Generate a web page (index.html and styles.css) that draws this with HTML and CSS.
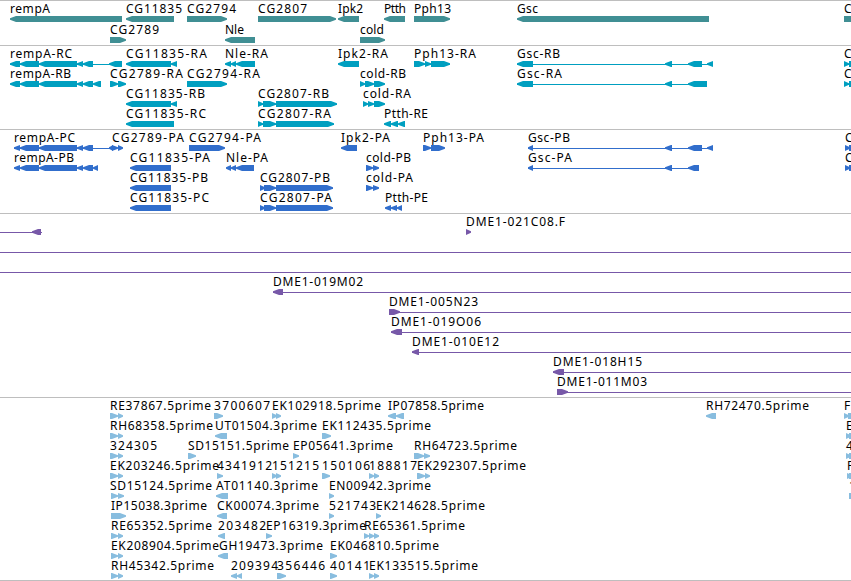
FILE: index.html
```
<!DOCTYPE html>
<html lang="en">
<head>
<meta charset="utf-8">
<title>Genome tracks</title>
<link rel="stylesheet" href="styles.css">
</head>
<body>
<main class="browser" id="browser"></main>
<script src="tracks.js"></script>
</body>
</html>
```
FILE: styles.css
```
html, body {
  margin: 0;
  background: #fff;
}
body {
  overflow: hidden;
}
.browser {
  display: flex;
  flex-direction: column;
  width: 851px;
  height: 580px;
  border-bottom: 1px solid #bebebe;
}
.track {
  box-sizing: border-box;
  border-top: 1px solid #bebebe;
  overflow: hidden;
}
.track svg {
  display: block;
}
.label {
  font-family: "Noto Sans", "Open Sans", sans-serif;
  font-size: 12px;
  fill: #000;
}
.gene { height: 45px; }
.gene .glyph { fill: #408f94; }
.transcript { height: 84px; }
.transcript .glyph { fill: #009fc0; }
.protein { height: 84px; }
.protein .glyph { fill: #316ecc; }
.clone { height: 184px; }
.clone .glyph { fill: #7758a8; }
.est { height: 183px; }
.est .glyph { fill: #88bddf; }
```
FILE: tracks.js
```
// Feature format: label | label start | label end | strand | blocks | connector
// An empty label end leaves the text at its natural width.
const tracks = [
  { kind: 'gene', height: 44, pitch: 21, rows: [
    ['rempA|10|50|<|10-122', 'CG11835|126|182|<|126-174', 'CG2794|187|236|>|187-227',
     'CG2807|258|307|>|258-336', 'Ipk2|338|363|<|338-359', 'Ptth|384|406|<|384-405',
     'Pph13|414|451|>|414-450', 'Gsc|517|538|<|517-709', 'C|844||>|844-900'],
    ['CG2789|110|159|>|110-126', 'Nle|225|244|<|225-255', 'cold|360|384|>|360-385']
  ]},
  { kind: 'transcript', height: 83, pitch: 20, rows: [
    ['rempA-RC|10|72|<|10-20,20-39,39-77,77-83,83-93,109-122|10-122',
     'CG11835-RA|126|207|<|126-171,171-177', 'Nle-RA|225|268|<|225-231,231-236,236-255',
     'Ipk2-RA|338|388|<|338-359', 'Pph13-RA|414|476|>|414-425,425-431,431-450|414-450',
     'Gsc-RB|517|560|<|517-533,665-672,688-702,707-713|517-713', 'C|844||>|844-849,849-870|844-870'],
    ['rempA-RB|10|71|<|10-20,20-39,39-77,77-83,83-93,93-101', 'CG2789-RA|110|183|>|110-118,118-126',
     'CG2794-RA|187|260|>|187-227', 'cold-RB|360|406|>|360-365,365-374,374-385',
     'Gsc-RA|517|562|<|517-533,665-672,688-707|517-707', 'C|844||>|844-849,849-870|844-870'],
    ['CG11835-RB|126|205|<|126-171,171-177', 'CG2807-RB|258|329|>|258-263,263-276,276-337|258-337',
     'cold-RA|363|411|>|363-368,368-374,374-385'],
    ['CG11835-RC|126|206|<|126-174', 'CG2807-RA|258|331|>|258-263,263-276,276-334|258-334',
     'Ptth-RE|384|428|<|384-391,391-398,398-405']
  ]},
  { kind: 'protein', height: 83, pitch: 20, rows: [
    ['rempA-PC|14|75|<|14-20,20-39,39-77,77-83,83-93,109-113|14-113',
     'CG2789-PA|112|184|>|112-118,118-123', 'CG2794-PA|189|261|>|189-225',
     'Ipk2-PA|341|390|<|341-357', 'Pph13-PA|423|484|>|423-431,431-445',
     'Gsc-PB|528|570|<|528-533,665-672,688-702,707-713|528-713', 'C|845||>|845-850,849-870|845-870'],
    ['rempA-PB|14|74|<|14-20,20-39,39-77,77-83,83-93,93-98', 'CG11835-PA|130|210|<|130-171',
     'Nle-PA|226|268|<|226-231,231-236,236-254', 'cold-PB|366|411|>|366-373,373-379',
     'Gsc-PA|528|572|<|528-533,665-672,688-699|528-699', 'C|845||>|845-850,849-870|845-870'],
    ['CG11835-PB|130|208|<|130-171', 'CG2807-PB|260|330|>|260-265,264-276,276-333|260-333',
     'cold-PA|366|413|>|366-373,373-379'],
    ['CG11835-PC|130|209|<|130-171', 'CG2807-PA|260|332|>|260-265,264-276,276-333|260-333',
     'Ptth-PE|385|428|<|385-391,391-397,397-402']
  ]},
  { kind: 'clone', height: 183, pitch: 20, rows: [
    ['|||<|32-41|0-42', 'DME1-021C08.F|466|565|>|466-471'],
    ['|||<||0-851'],
    ['|||<||0-851'],
    ['DME1-019M02|273|363|<|273-283|273-851'],
    ['DME1-005N23|389|478|>|389-400|389-851'],
    ['DME1-019O06|391|481|<|391-402|391-851'],
    ['DME1-010E12|412|499|<|412-419|412-851'],
    ['DME1-018H15|553|642|<|553-564|553-851'],
    ['DME1-011M03|557|647|>|557-568|557-851']
  ]},
  { kind: 'est', height: 182, pitch: 20, rows: [
    ['RE37867.5prime|110|211|>|110-118,118-123', '3700607|214|270|>|214-223',
     'EK102918.5prime|272|381|>|272-277,276-281', 'IP07858.5prime|388|484|<|388-396,396-404',
     'RH72470.5prime|706|809|<|706-716', 'F|844||>|844-849,848-870'],
    ['RH68358.5prime|110|213|>|110-118,118-123', 'UT01504.3prime|215|317|<|215-227',
     'EK112435.5prime|322|431|>|322-331', 'E|846||>|846-851,849-870'],
    ['324305|110|157|>|110-118,118-123', 'SD15151.5prime|188|289|>|188-196',
     'EP05641.3prime|293|393|>|293-299', 'RH64723.5prime|414|517|>|414-424,424-430',
     '4|846||>|846-851,849-870'],
    ['EK203246.5prime|110|219|>|110-118,118-123', '4341912|217|272|>|217-223',
     '151215|272|319|>|272-277,276-281', '150106|322|370|>|322-330',
     '188817|369|417|>|369-374,374-379', 'EK292307.5prime|417|526|>|417-425,425-430',
     'F|847||>|847-852,849-870'],
    ['SD15124.5prime|110|212|>|111-118,118-124', 'AT01140.3prime|216|318|<|216-228',
     'EN00942.3prime|329|431|>|329-334', '1|849||>|849-870'],
    ['IP15038.3prime|111|207|>|111-126', 'CK00074.3prime|217|319|<|217-227',
     '521743|329|376|>|329-334', 'EK214628.5prime|376|485|>|376-381'],
    ['RE65352.5prime|111|212|>|111-118,118-123', '203482|218|266|<|218-225',
     'EP16319.3prime|266|366|>|266-272', 'RE65361.5prime|364|465|>|364-369,369-374,374-379'],
    ['EK208904.5prime|111|219|>|111-118,118-123', 'GH19473.3prime|219|323|<|218-228',
     'EK046810.5prime|330|439|>|330-337'],
    ['RH45342.5prime|111|214|>|111-118,118-123', '209394|231|278|<|231-237,237-242',
     '356446|277|325|>|277-286', '40141|330|370|>|330-337',
     'EK133515.5prime|369|478|>|369-374,374-379']
  ]}
];

// Block with an arrowhead pointing along its strand.
function block(a, b, strand, y) {
  const head = Math.min(b - a, 6);
  const s = strand === '<' ? 1 : -1;
  const tip = s > 0 ? a : b;
  const back = s > 0 ? b : a;
  const points = [
    [tip, y + 2.3], [tip + s * head, y], [back, y], [back, y + 6],
    [tip + s * head, y + 6], [tip, y + 3.7]
  ];
  return `<polygon class="glyph" points="${points.map(p => p.join()).join(' ')}"/>`;
}

function feature(text, top) {
  const [name, x, end, strand, blocks, line] = text.split('|');
  let out = '';
  if (line) {
    const [a, b] = line.split('-').map(Number);
    out += `<rect class="glyph" x="${a}" y="${top + 18}" width="${b - a}" height="1"/>`;
  }
  if (blocks) {
    for (const pair of blocks.split(',')) {
      const [a, b] = pair.split('-').map(Number);
      out += block(a, b, strand, top + 15);
    }
  }
  if (name) {
    const fit = end ? ` textLength="${end - x}"` : '';
    out += `<text class="label" x="${x}" y="${top + 12}"${fit}>${name}</text>`;
  }
  return out;
}

document.getElementById('browser').innerHTML = tracks.map(t =>
  `<section class="track ${t.kind}"><svg width="851" height="${t.height}">` +
  t.rows.map((row, i) => row.map(f => feature(f, i * t.pitch)).join('')).join('') +
  '</svg></section>').join('');
```
